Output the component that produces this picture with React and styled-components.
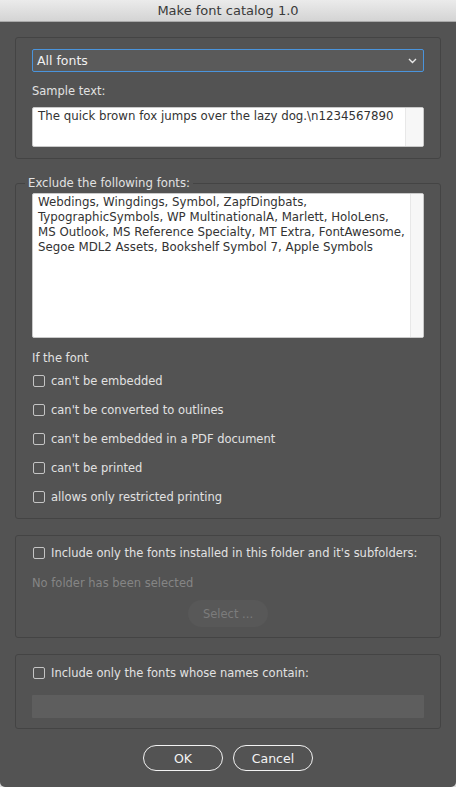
import styled, { createGlobalStyle } from 'styled-components';

const GlobalStyle = createGlobalStyle`
  html, body {
    margin: 0;
    padding: 0;
    background: #dcdcdc;
  }
  * {
    box-sizing: border-box;
  }
`;

const Window = styled.div`
  width: 456px;
  height: 787px;
  background: #535353;
  border-radius: 0 0 5px 5px;
  overflow: hidden;
  display: flex;
  flex-direction: column;
  font-family: "DejaVu Sans", "Liberation Sans", sans-serif;
  font-size: 11.5px;
  color: #e2e2e2;
`;

const TitleBar = styled.div`
  height: 22px;
  flex: none;
  background: linear-gradient(#ebebeb, #d4d4d4);
  border-bottom: 1px solid #a9a9a9;
  display: flex;
  align-items: center;
  justify-content: center;
  font-size: 13px;
  color: #3a3a3a;
`;

const Content = styled.div`
  padding: 15px 15px 0;
  display: flex;
  flex-direction: column;
  gap: 16px;
`;

const Panel = styled.div`
  border: 1px solid #444444;
  border-radius: 3px;
  padding: ${props => props.pad || '11px 16px'};
  display: flex;
  flex-direction: column;
`;

const Fieldset = styled.fieldset`
  margin: 0;
  border: 1px solid #444444;
  border-radius: 3px;
  padding: 0 16px 13px;
  display: flex;
  flex-direction: column;
  min-width: 0;
`;

const Legend = styled.legend`
  padding: 0 3px;
  margin-left: -7px;
  line-height: 16px;
  font-size: 11.7px;
  color: #e2e2e2;
`;

const Dropdown = styled.div`
  height: 23px;
  background: #5a5a5a;
  border: 1px solid #4a94dc;
  border-radius: 2px;
  display: flex;
  align-items: center;
  justify-content: space-between;
  padding: 0 6px 0 4px;
  font-size: 12.5px;
  color: #f0f0f0;
`;

const Label = styled.div`
  line-height: 16px;
  color: ${props => props.dim ? '#858585' : '#e2e2e2'};
  margin: ${props => props.m || '0'};
`;

const Field = styled.div`
  height: ${props => props.h}px;
  background: #ffffff;
  border: 1px solid #c9c9c9;
  border-radius: 2px;
  display: flex;
  overflow: hidden;
  margin-top: ${props => props.mt || 0}px;
`;

const FieldText = styled.div`
  flex: 1;
  padding: 1px 5px 0;
  line-height: 15px;
  font-size: 11.8px;
  color: #333333;
  white-space: pre;
`;

const Gutter = styled.div`
  width: 18px;
  flex: none;
  background: #f7f7f7;
  border-left: 1px solid #e8e8e8;
`;

const CheckList = styled.div`
  display: flex;
  flex-direction: column;
  gap: 13px;
  margin-top: 7px;
`;

const CheckRow = styled.label`
  display: flex;
  align-items: center;
  gap: 6px;
  height: 16px;
  padding-left: 1px;
  white-space: nowrap;
  color: #e2e2e2;
`;

const Box = styled.span`
  width: 12px;
  height: 12px;
  border: 1px solid #c4c4c4;
  border-radius: 2px;
  flex: none;
`;

const PillRow = styled.div`
  display: flex;
  justify-content: center;
  gap: ${props => props.gap || 0}px;
  margin-top: ${props => props.mt || 0}px;
`;

const Pill = styled.div`
  width: 80px;
  height: ${props => props.h || 26}px;
  border-radius: 14px;
  display: flex;
  align-items: center;
  justify-content: center;
  font-size: ${props => props.disabled ? '11.5px' : '12.5px'};
  color: ${props => props.disabled ? '#7c7c7c' : '#f4f4f4'};
  background: ${props => props.disabled ? '#585858' : 'transparent'};
  border: ${props => props.disabled ? 'none' : '1.5px solid #f2f2f2'};
`;

const NameInput = styled.div`
  height: 23px;
  margin-top: 14px;
  background: #5e5e5e;
  border-radius: 1px;
`;

const Chevron = () => (
  <svg width="9" height="6" viewBox="0 0 9 6">
    <path d="M1 1 L4.5 4.5 L8 1" fill="none" stroke="#e8e8e8" strokeWidth="1.4" />
  </svg>
);

const Check = ({ children }) => (
  <CheckRow>
    <Box />
    {children}
  </CheckRow>
);

const excluded = [
  'Webdings, Wingdings, Symbol, ZapfDingbats,',
  'TypographicSymbols, WP MultinationalA, Marlett, HoloLens,',
  'MS Outlook, MS Reference Specialty, MT Extra, FontAwesome,',
  'Segoe MDL2 Assets, Bookshelf Symbol 7, Apple Symbols',
].join('\n');

const App = () => {
  return (
    <>
      <GlobalStyle />
      <Window>
        <TitleBar>Make font catalog 1.0</TitleBar>
        <Content>
          <Panel>
            <Dropdown>
              All fonts
              <Chevron />
            </Dropdown>
            <Label m="11px 0 8px">Sample text:</Label>
            <Field h={40}>
              <FieldText>{'The quick brown fox jumps over the lazy dog.\\n1234567890'}</FieldText>
              <Gutter />
            </Field>
          </Panel>

          <Fieldset>
            <Legend>Exclude the following fonts:</Legend>
            <Field h={145} mt={2}>
              <FieldText>{excluded}</FieldText>
              <Gutter />
            </Field>
            <Label m="12px 0 0">If the font</Label>
            <CheckList>
              <Check>can't be embedded</Check>
              <Check>can't be converted to outlines</Check>
              <Check>can't be embedded in a PDF document</Check>
              <Check>can't be printed</Check>
              <Check>allows only restricted printing</Check>
            </CheckList>
          </Fieldset>

          <Panel pad="9px 16px 10px">
            <Check>Include only the fonts installed in this folder and it's subfolders:</Check>
            <Label dim m="14px 0 9px">No folder has been selected</Label>
            <PillRow>
              <Pill disabled h={27}>Select ...</Pill>
            </PillRow>
          </Panel>

          <Panel pad="10px 16px 10px">
            <Check>Include only the fonts whose names contain:</Check>
            <NameInput />
          </Panel>
        </Content>
        <PillRow gap={10} mt={16}>
          <Pill>OK</Pill>
          <Pill>Cancel</Pill>
        </PillRow>
      </Window>
    </>
  );
};

export default App;
